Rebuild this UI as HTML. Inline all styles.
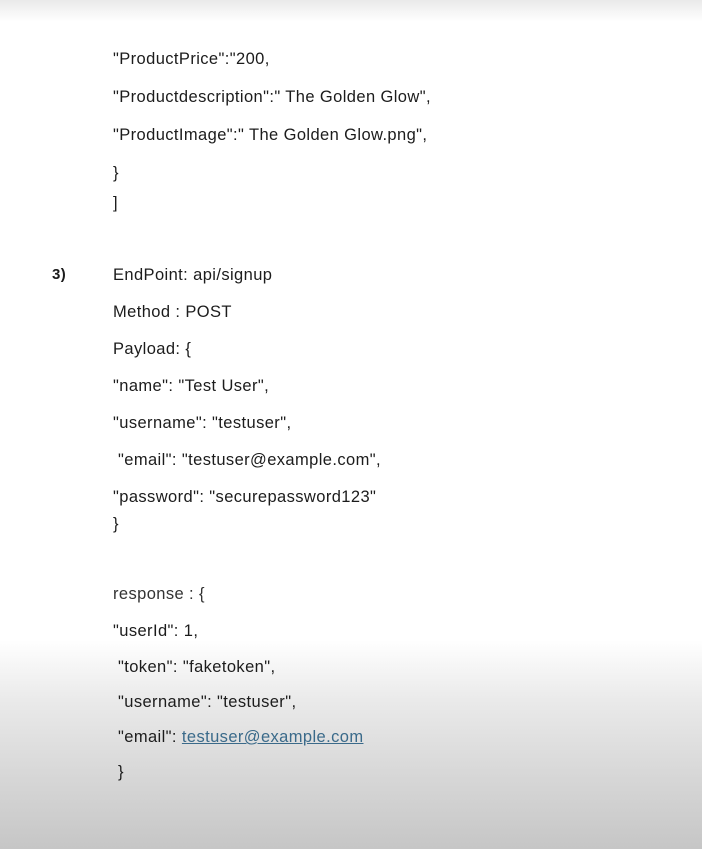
<!DOCTYPE html>
<html><head><style>
html,body{margin:0;padding:0}
body{width:702px;height:849px;position:relative;overflow:hidden;
background:linear-gradient(to bottom,#e9e9e9 0px,#f6f6f6 12px,#fff 22px,#fff 640px,#eaeaea 700px,#d6d6d6 780px,#c6c6c6 849px);
font-family:"Liberation Sans",sans-serif;font-size:16.5px;color:#1c1c1c;letter-spacing:0.4px}
.l{position:absolute;left:113px;white-space:nowrap;line-height:18px}
.n{position:absolute;left:52px;font-weight:bold;line-height:18px;font-size:15px}
a{color:#3a6a8a;text-decoration:underline}
</style></head><body>
<div class="l" style="top:50px">"ProductPrice":"200,</div>
<div class="l" style="top:88px">"Productdescription":" The Golden Glow",</div>
<div class="l" style="top:126px">"ProductImage":" The Golden Glow.png",</div>
<div class="l" style="top:164px">}</div>
<div class="l" style="top:194px">]</div>
<div class="n" style="top:266px">3)</div>
<div class="l" style="top:266px">EndPoint: api/signup</div>
<div class="l" style="top:303px">Method : POST</div>
<div class="l" style="top:340px">Payload: {</div>
<div class="l" style="top:377px">"name": "Test User",</div>
<div class="l" style="top:414px">"username": "testuser",</div>
<div class="l" style="top:451px">&nbsp;"email": "testuser@example.com",</div>
<div class="l" style="top:488px">"password": "securepassword123"</div>
<div class="l" style="top:515px">}</div>
<div class="l" style="top:585px;color:#333">response : {</div>
<div class="l" style="top:622px">"userId": 1,</div>
<div class="l" style="top:658px">&nbsp;"token": "faketoken",</div>
<div class="l" style="top:693px">&nbsp;"username": "testuser",</div>
<div class="l" style="top:728px">&nbsp;"email": <a>testuser@example.com</a></div>
<div class="l" style="top:763px">&nbsp;}</div>
</body></html>
